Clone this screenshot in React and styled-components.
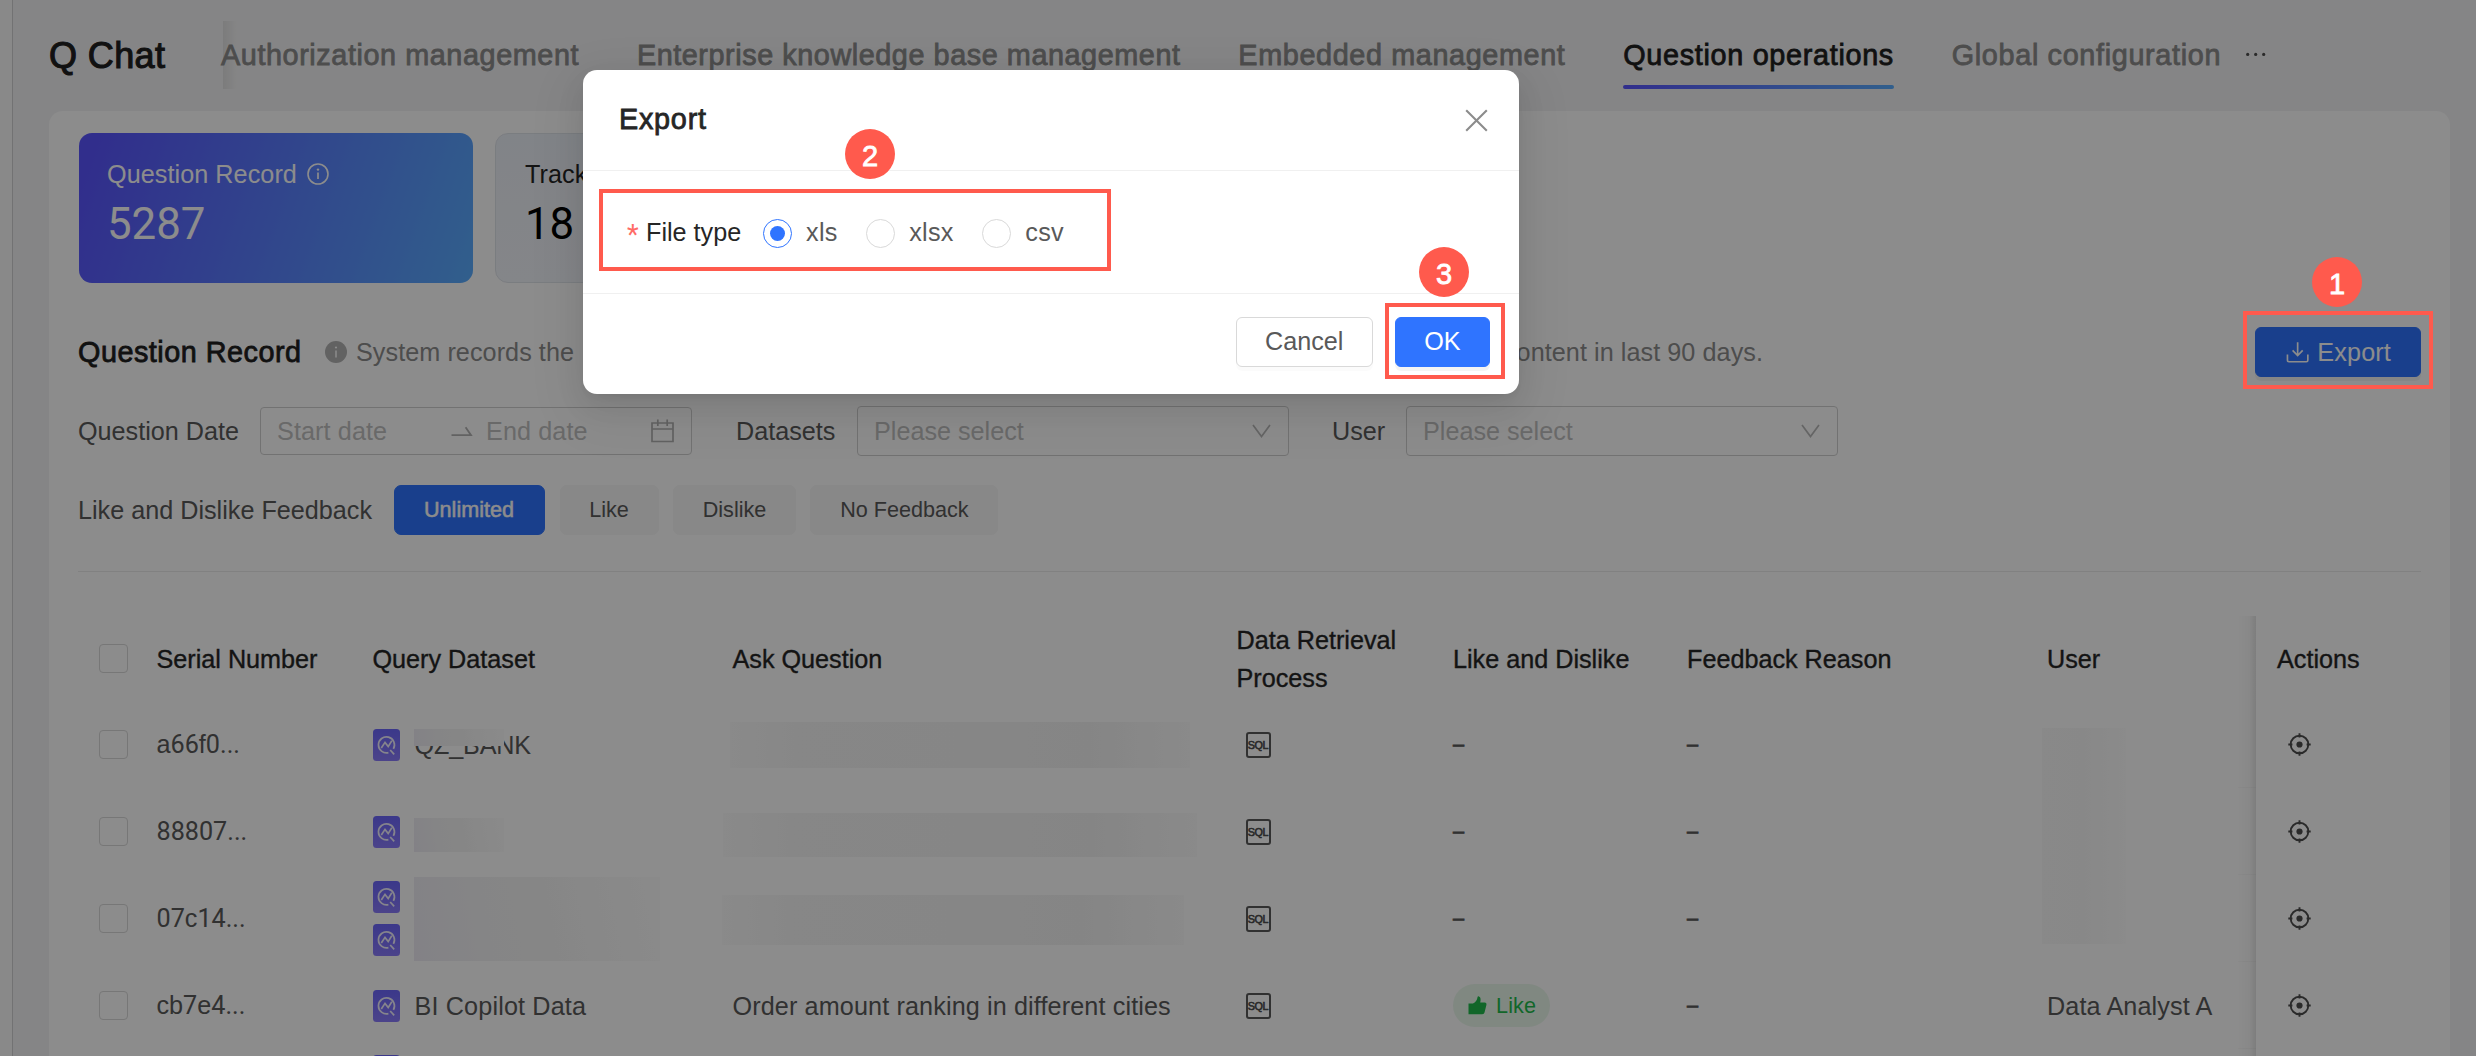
import React from "react";
import styled, { createGlobalStyle, css } from "styled-components";

const sans = `"Liberation Sans", Arial, Helvetica, sans-serif`;
const digits = `Roboto, "Liberation Sans", sans-serif`;

const GlobalStyle = createGlobalStyle`
  * { box-sizing: border-box; }
  html, body { margin: 0; padding: 0; overflow: hidden; }
  body { font-family: ${sans}; font-size: 25.2px; color: rgba(0, 0, 0, 0.65); }
`;

const medium = css`
  -webkit-text-stroke: 0.8px currentColor;
`;

const Screen = styled.div`
  position: relative;
  width: 2476px;
  height: 1056px;
  overflow: hidden;
  display: flex;
  background: #f3f3f4;
`;

const SideEdge = styled.div`
  flex: none;
  width: 13px;
  background: #fafafa;
  border-right: 1px solid #cfcfd1;
`;

const Main = styled.div`
  flex: 1;
  padding: 0 26px 0 36px;
  display: flex;
  flex-direction: column;
`;

const TopBar = styled.header`
  flex: none;
  height: 111px;
  display: flex;
  align-items: flex-start;
`;

const Brand = styled.h1`
  margin: 35px 0 0;
  width: 174px;
  font-size: 36px;
  line-height: 42px;
  font-weight: 400;
  letter-spacing: 0.4px;
  color: #1f1f1f;
  white-space: nowrap;
  -webkit-text-stroke: 1.1px currentColor;
`;

const Tabs = styled.nav`
  display: flex;
  gap: 57.8px;
  margin-top: 21px;
  height: 68px;
  background: linear-gradient(90deg, rgba(0, 0, 0, 0.075), rgba(0, 0, 0, 0) 14px);
`;

const Tab = styled.a`
  display: flex;
  flex-direction: column;
  justify-content: space-between;
  padding-top: 17px;
  font-size: 28.8px;
  line-height: 34px;
  letter-spacing: ${(p) => p.$spacing}px;
  white-space: nowrap;
  color: ${(p) => (p.$active ? "#1f1f1f" : "#8c8c8c")};
  ${medium}
  &:first-child {
    margin-left: -2px;
  }
  &::after {
    content: "";
    height: 4px;
    border-radius: 2px;
    background: ${(p) => (p.$active ? "linear-gradient(90deg, #5955ff, #59adff)" : "transparent")};
  }
`;

const More = styled.svg`
  margin: 50px 0 0 23px;
`;

const Panel = styled.main`
  flex: 1;
  padding: 22px 29px 0;
  border-radius: 14px 14px 0 0;
  background: #fff;
  overflow: hidden;
`;

const Stats = styled.div`
  display: flex;
  gap: 22px;
  padding-left: 1px;
`;

const StatCard = styled.div`
  width: 394px;
  height: 150px;
  padding: 24px 28px;
  border-radius: 13px;
  color: ${(p) => (p.$active ? "#fff" : "#262626")};
  ${(p) =>
    p.$active
      ? "background: linear-gradient(110deg, #5955ff 5%, #59adff);"
      : "background: linear-gradient(180deg, #ecf0f7, #f1f4f9); border: 1px solid #dfe3ea; padding: 23px 29px;"}
`;

const StatLabel = styled.div`
  display: flex;
  align-items: center;
  gap: 10px;
  line-height: 34px;
  letter-spacing: 0.06px;
  white-space: nowrap;
`;

const StatValue = styled.div`
  margin-top: 8px;
  font-family: ${digits};
  font-size: 43.8px;
  line-height: 50px;
  color: ${(p) => (p.$active ? "#fff" : "#000")};
`;

const TitleRow = styled.div`
  display: flex;
  align-items: center;
  height: 50px;
  margin-top: 44px;
`;

const SectionTitle = styled.h2`
  margin: 0;
  width: 247px;
  font-size: 28.8px;
  font-weight: 400;
  letter-spacing: 0.5px;
  color: #1f1f1f;
  white-space: nowrap;
  ${medium}
`;

const Notice = styled.p`
  margin: 0 auto 0 9px;
  width: 1407px;
  display: flex;
  justify-content: space-between;
  letter-spacing: 0.06px;
  color: #8c8c8c;
`;

const Button = styled.button`
  height: 50px;
  padding: 0 28.4px;
  display: flex;
  align-items: center;
  justify-content: center;
  gap: 8px;
  font: inherit;
  border-radius: 6px;
  border: 1px solid ${(p) => (p.$primary ? "#2f74ff" : "#d9d9d9")};
  background: ${(p) => (p.$primary ? "#2f74ff" : "#fff")};
  color: ${(p) => (p.$primary ? "#fff" : "#595959")};
  box-shadow: 0 4px 0 rgba(0, 0, 0, ${(p) => (p.$primary ? 0.043 : 0.016)});
`;

const ExportButton = styled(Button)`
  width: 166px;
  padding: 0 29px 0 30px;
  letter-spacing: 0.15px;
`;

const FilterRow = styled.div`
  display: flex;
  align-items: center;
  height: 50px;
  margin-top: 29px;
  color: #595959;
`;

const FilterLabel = styled.label`
  white-space: nowrap;
  width: ${(p) => p.$width}px;
`;

const Field = styled.div`
  width: 432px;
  height: ${(p) => p.$height}px;
  margin-right: ${(p) => p.$after}px;
  padding: 0 17px 0 16px;
  display: flex;
  align-items: center;
  border: 1px solid #d0d0d0;
  border-radius: 4px;
  color: #bfbfbf;
`;

const DateSlot = styled.span`
  display: flex;
  letter-spacing: 0.1px;
  width: ${(p) => p.$width}px;
`;

const Chevron = styled.svg`
  margin-left: auto;
`;

const Choices = styled.div`
  display: flex;
  gap: 14.5px;
`;

const Choice = styled.button`
  height: 50px;
  padding: 0 ${(p) => (p.$active ? 30 : 28.7)}px 0 ${(p) => (p.$active ? 29 : 28.7)}px;
  border: 1px solid ${(p) => (p.$active ? "#2f74ff" : "#f7f7f7")};
  border-radius: 7px;
  background: ${(p) => (p.$active ? "#2f74ff" : "#f7f7f7")};
  color: ${(p) => (p.$active ? "#fff" : "#595959")};
  font: inherit;
  font-size: 21.6px;
  -webkit-text-stroke: ${(p) => (p.$active ? "0.5px currentColor" : "0")};
`;

const Divider = styled.hr`
  height: 1px;
  margin: 36px 0 44px;
  border: 0;
  background: #ebebeb;
`;

const Table = styled.div`
  position: relative;
`;

const TableRow = styled.div`
  display: grid;
  grid-template-columns: 57px 216px 360px 504px 216.5px 234px 360px 230px 165px;
  height: ${(p) => (p.$header ? 85 : 87)}px;
  ${(p) => p.$header && "-webkit-text-stroke: 0.35px currentColor;"}
`;

const Cell = styled.div`
  display: flex;
  align-items: center;
  gap: 15px;
  padding: 0 0 0 21.5px;
  line-height: 38px;
  letter-spacing: ${(p) => (p.$header ? 0 : 0.12)}px;
  color: ${(p) => (p.$header ? "#262626" : "#595959")};
`;

const SelectCell = styled(Cell)`
  padding-left: 20.5px;
`;

const FixedCell = styled(Cell)`
  position: relative;
  background: #fff;
  &::before {
    content: "";
    position: absolute;
    right: 100%;
    top: 0;
    bottom: 0;
    width: 18px;
    border-bottom: ${(p) => (p.$header ? 0 : 1)}px solid rgba(0, 0, 0, 0.025);
    background: linear-gradient(270deg, rgba(0, 0, 0, 0.1), rgba(0, 0, 0, 0.03) 35%, rgba(0, 0, 0, 0));
  }
`;

const Checkbox = styled.span`
  flex: none;
  width: 29px;
  height: 29px;
  border: 1.5px solid #d9d9d9;
  border-radius: 4px;
`;

const Serial = styled.span`
  font-family: ${digits};
  font-size: 25.2px;
  letter-spacing: 0;
`;

const Letters = styled.span`
  font-family: ${sans};
`;

const Stack = styled.div`
  display: flex;
  flex-direction: column;
  gap: 11px;
`;

const DatasetName = styled.span`
  position: relative;
  letter-spacing: ${(p) => p.$spacing || 0}px;
  white-space: nowrap;
`;

const Smudge = styled.div`
  flex: none;
  width: ${(p) => p.$width}px;
  height: ${(p) => p.$height}px;
  margin: ${(p) => p.$margin || "0"};
  background: linear-gradient(90deg, #fbfbfb, #f6f6f6 14%, #f5f5f5 50%, #f3f3f3 78%, #fbfbfb);
`;

const TintedSmudge = styled(Smudge)`
  background: linear-gradient(80deg, #eeecf5, #f3f3f5 30%, #f5f5f5 55%, #fcfcfc);
`;

const PaleSmudge = styled(Smudge)`
  background: linear-gradient(90deg, #f9f9f9, #f8f8f8 50%, #fdfdfd);
`;

const NameCover = styled(TintedSmudge)`
  position: absolute;
  left: -1px;
  top: 3px;
`;

const Dash = styled.span`
  font-size: 20px;
  padding-bottom: 2px;
  -webkit-text-stroke: 0.7px currentColor;
`;

const LikeTag = styled.span`
  height: 43px;
  padding: 0 14px 0 15px;
  display: flex;
  align-items: center;
  gap: 9px;
  border-radius: 22px;
  background: #eaf8ec;
  color: #1fbb4c;
  font-size: 21.6px;
`;

const IconPad = styled.span`
  display: flex;
  padding-left: ${(p) => p.$left}px;
`;

const Mask = styled.div`
  position: absolute;
  inset: 0;
  padding: 70px 0 0 583px;
  background: rgba(0, 0, 0, 0.45);
`;

const Modal = styled.section`
  width: 936px;
  height: 324px;
  display: flex;
  flex-direction: column;
  border-radius: 14px;
  background: #fff;
  box-shadow: 0 5px 11px -7px rgba(0, 0, 0, 0.12), 0 11px 29px rgba(0, 0, 0, 0.08),
    0 16px 50px 14px rgba(0, 0, 0, 0.05);
`;

const ModalHeader = styled.div`
  height: 101px;
  padding: 0 31px 0 36px;
  display: flex;
  align-items: center;
  justify-content: space-between;
  border-bottom: 1px solid #f0f0f0;
`;

const ModalTitle = styled.h3`
  margin: -1px 0 0;
  font-size: 28.8px;
  font-weight: 400;
  letter-spacing: 0.75px;
  color: #262626;
  ${medium}
`;

const ModalBody = styled.div`
  height: 122px;
  padding: 3px 0 0 44px;
  display: flex;
  align-items: center;
`;

const Required = styled.span`
  width: 19px;
  padding-top: 2px;
  font-family: ${digits};
  font-size: 27px;
  color: #ff6b66;
`;

const FormLabel = styled.span`
  width: 117px;
  margin-top: -2px;
  color: #262626;
  white-space: nowrap;
`;

const RadioOption = styled.label`
  display: flex;
  align-items: center;
  gap: 14px;
  margin-right: 28.5px;
  letter-spacing: 0.3px;
  color: #595959;
`;

const RadioText = styled.span`
  margin-top: -2px;
`;

const RadioDot = styled.span`
  display: flex;
  align-items: center;
  justify-content: center;
  width: 29px;
  height: 29px;
  border-radius: 50%;
  border: 1.6px solid ${(p) => (p.$checked ? "#2f74ff" : "#d9d9d9")};
  &::after {
    content: "";
    width: 15px;
    height: 15px;
    border-radius: 50%;
    background: ${(p) => (p.$checked ? "#2f74ff" : "transparent")};
  }
`;

const ModalFooter = styled.div`
  flex: 1;
  padding: 0 29px 5px;
  display: flex;
  align-items: center;
  justify-content: flex-end;
  gap: 22px;
  border-top: 1px solid #f0f0f0;
`;

const Highlight = styled.div`
  position: absolute;
  left: ${(p) => p.$x}px;
  top: ${(p) => p.$y}px;
  width: ${(p) => p.$w}px;
  height: ${(p) => p.$h}px;
  border: 4px solid #ff5a4d;
`;

const StepBadge = styled.div`
  position: absolute;
  left: ${(p) => p.$x}px;
  top: ${(p) => p.$y}px;
  width: 50px;
  height: 50px;
  padding-top: 3px;
  display: flex;
  align-items: center;
  justify-content: center;
  border-radius: 50%;
  background: #ff5a4d;
  color: #fff;
  font-size: 29px;
  line-height: 34px;
  ${medium}
`;

const InfoOutline = () => (
  <svg width="22" height="22" viewBox="0 0 22 22" fill="none" stroke="#fff">
    <circle cx="11" cy="11" r="10" strokeWidth="1.6" />
    <path d="M11 9.5V16" strokeWidth="1.7" />
    <circle cx="11" cy="6.6" r="1.2" fill="#fff" stroke="none" />
  </svg>
);

const InfoFilled = () => (
  <svg width="22" height="22" viewBox="0 0 22 22">
    <circle cx="11" cy="11" r="11" fill="#b3b3b3" />
    <path d="M11 9.5V16.5" stroke="#fff" strokeWidth="1.5" />
    <circle cx="11" cy="6.5" r="1.1" fill="#fff" />
  </svg>
);

const DownloadIcon = () => (
  <svg width="24" height="24" viewBox="0 0 24 24" fill="none" stroke="#fff" strokeWidth="1.7">
    <path d="M12 2V15.5M6.8 10.4L12 15.6L17.2 10.4M1.5 14.5V20.5Q1.5 22 3 22H21Q22.5 22 22.5 20.5V14.5" />
  </svg>
);

const CalendarIcon = () => (
  <svg width="23" height="24" viewBox="0 0 23 24" fill="none" stroke="#b3b3b3" strokeWidth="1.7">
    <path d="M1 4H22V22.5H1ZM1 10H22M6.8 0.5V7M16.2 0.5V7" />
  </svg>
);

const SwapArrow = () => (
  <svg width="22" height="12" viewBox="0 0 22 12" fill="none" stroke="#b3b3b3" strokeWidth="1.8">
    <path d="M0.5 10.2H20L14.6 2.2" />
  </svg>
);

const DownIcon = () => (
  <Chevron width="19" height="14" viewBox="0 0 19 14" fill="none" stroke="#b8b8b8" strokeWidth="1.7">
    <path d="M1 1L9.5 12.5L18 1" />
  </Chevron>
);

const CloseIcon = () => (
  <svg width="23" height="23" viewBox="0 0 23 23" fill="none" stroke="#8c8c8c" strokeWidth="2.1">
    <path d="M1.2 1.2L21.8 21.8M21.8 1.2L1.2 21.8" />
  </svg>
);

const DatasetSvg = styled.svg`
  flex: none;
`;

const DatasetIcon = () => (
  <DatasetSvg width="27" height="32" viewBox="0 0 27 32">
    <defs>
      <linearGradient id="datasetFill" x1="0" y1="0" x2="0" y2="1">
        <stop offset="0" stopColor="#6c67fb" />
        <stop offset="1" stopColor="#8a7bfb" />
      </linearGradient>
    </defs>
    <rect width="27" height="32" rx="3.5" fill="url(#datasetFill)" />
    <g fill="none" stroke="#f2f0ff" strokeWidth="1.7">
      <path d="M15.4 23.6A8 8 0 1 1 20.4 19.8" />
      <path d="M8.3 19L12 13.4L15.2 17.6L18.8 11.8" />
      <path d="M17.2 21L21.2 25.4" />
    </g>
  </DatasetSvg>
);

const SqlBox = styled.span`
  display: flex;
  align-items: center;
  justify-content: center;
  width: 25px;
  height: 26px;
  border: 2px solid #595959;
  border-radius: 3px;
  color: #4a4a4a;
  font-size: 10.8px;
  line-height: 12px;
  letter-spacing: -0.4px;
  -webkit-text-stroke: 0.6px currentColor;
`;

const LocateIcon = () => (
  <svg width="23" height="23" viewBox="0 0 23 23" fill="none" stroke="#4d4d4d" strokeWidth="1.9">
    <circle cx="11.5" cy="11.5" r="8.8" />
    <path d="M11.5 0.3V4.4M11.5 18.6V22.7M0.3 11.5H4.4M18.6 11.5H22.7" />
    <circle cx="11.5" cy="11.5" r="3.1" fill="#4d4d4d" stroke="none" />
  </svg>
);

const ThumbIcon = () => (
  <svg width="19" height="19" viewBox="0 0 19 19" fill="#1fbb4c">
    <path d="M0.5 7.6H4.9C7.5 6.2 9.2 4.2 9.5 1.2C9.6 0.4 10.2 0.2 10.9 0.4C12.9 1.1 12.9 3.8 12.2 6.5H16.6C18.2 6.5 18.8 7.6 18.4 8.9L16.6 16.3C16.3 17.6 15.5 18.3 14.2 18.3H0.5Z" />
  </svg>
);

const tabs = [
  { label: "Authorization management", spacing: 0.58 },
  { label: "Enterprise knowledge base management", spacing: 0.56 },
  { label: "Embedded management", spacing: 0.62 },
  { label: "Question operations", spacing: 0.68, active: true },
  { label: "Global configuration", spacing: 0.66 },
];

const headers = [
  "Serial Number",
  "Query Dataset",
  "Ask Question",
  <>Data Retrieval<br />Process</>,
  "Like and Dislike",
  "Feedback Reason",
  "User",
];

const rows = [
  {
    serial: [<Letters key="a">a</Letters>, "66", <Letters key="f">f</Letters>, "0..."],
    icons: 1,
    name: (
      <DatasetName $spacing={-0.15}>
        QZ_BANK
        <NameCover $width={90} $height={17} />
      </DatasetName>
    ),
    question: <Smudge $width={460} $height={46} $margin="0 0 0 -3px" />,
    user: <PaleSmudge $width={84} $height={60} $margin="27px 0 0 -5px" />,
  },
  {
    serial: ["88807..."],
    icons: 1,
    name: <TintedSmudge $width={90} $height={34} $margin="6px 0 0 -1px" />,
    question: <Smudge $width={474} $height={44} $margin="7px 0 0 -10px" />,
    user: <PaleSmudge $width={84} $height={87} $margin="0 0 0 -5px" />,
  },
  {
    serial: ["07", <Letters key="c">c</Letters>, "14..."],
    icons: 2,
    name: <TintedSmudge $width={246} $height={84} $margin="0 0 0 -1px" />,
    question: <Smudge $width={462} $height={50} $margin="2px 0 0 -11px" />,
    user: <PaleSmudge $width={84} $height={69} $margin="0 0 18px -5px" />,
  },
  {
    serial: [<Letters key="cb">cb</Letters>, "7", <Letters key="e">e</Letters>, "4..."],
    icons: 1,
    name: <DatasetName $spacing={0.15}>BI Copilot Data</DatasetName>,
    question: "Order amount ranking in different cities",
    liked: true,
    user: "Data Analyst A",
  },
];

const Record = ({ row }) => (
  <TableRow>
    <SelectCell><Checkbox /></SelectCell>
    <Cell><Serial>{row.serial}</Serial></Cell>
    <Cell>
      <Stack>
        {Array.from({ length: row.icons }, (_, i) => <DatasetIcon key={i} />)}
      </Stack>
      {row.name}
    </Cell>
    <Cell>{row.question}</Cell>
    <Cell><IconPad $left={9}><SqlBox>SQL</SqlBox></IconPad></Cell>
    <Cell>{row.liked ? <LikeTag><ThumbIcon />Like</LikeTag> : <Dash>–</Dash>}</Cell>
    <Cell><Dash>–</Dash></Cell>
    <Cell>{row.user}</Cell>
    <FixedCell><IconPad $left={10.5}><LocateIcon /></IconPad></FixedCell>
  </TableRow>
);

export default function App() {
  return (
    <Screen>
      <GlobalStyle />
      <SideEdge />
      <Main>
        <TopBar>
          <Brand>Q Chat</Brand>
          <Tabs>
            {tabs.map((t) => (
              <Tab key={t.label} $active={t.active} $spacing={t.spacing}>{t.label}</Tab>
            ))}
          </Tabs>
          <More width="24" height="8" viewBox="0 0 24 8" fill="#4d4d4d">
            <circle cx="3.7" cy="4.4" r="1.6" />
            <circle cx="11.7" cy="4.4" r="1.6" />
            <circle cx="19.7" cy="4.4" r="1.6" />
          </More>
        </TopBar>
        <Panel>
          <Stats>
            <StatCard $active>
              <StatLabel>Question Record <InfoOutline /></StatLabel>
              <StatValue $active>5287</StatValue>
            </StatCard>
            <StatCard>
              <StatLabel>Track</StatLabel>
              <StatValue>18</StatValue>
            </StatCard>
          </Stats>
          <TitleRow>
            <SectionTitle>Question Record</SectionTitle>
            <InfoFilled />
            <Notice>
              <span>System records the</span>
              <span>content in last 90 days.</span>
            </Notice>
            <ExportButton $primary><DownloadIcon />Export</ExportButton>
          </TitleRow>
          <FilterRow>
            <FilterLabel $width={182}>Question Date</FilterLabel>
            <Field $height={48} $after={44}>
              <DateSlot $width={174}>Start date</DateSlot>
              <DateSlot $width={35}><SwapArrow /></DateSlot>
              <DateSlot $width={165}>End date</DateSlot>
              <CalendarIcon />
            </Field>
            <FilterLabel $width={121}>Datasets</FilterLabel>
            <Field $height={50} $after={43}>Please select<DownIcon /></Field>
            <FilterLabel $width={74}>User</FilterLabel>
            <Field $height={50} $after={0}>Please select<DownIcon /></Field>
          </FilterRow>
          <FilterRow>
            <FilterLabel $width={316}>Like and Dislike Feedback</FilterLabel>
            <Choices>
              {["Unlimited", "Like", "Dislike", "No Feedback"].map((c, i) => (
                <Choice key={c} $active={i === 0}>{c}</Choice>
              ))}
            </Choices>
          </FilterRow>
          <Divider />
          <Table>
            <TableRow $header>
              <SelectCell $header><Checkbox /></SelectCell>
              {headers.map((h, i) => <Cell $header key={i}>{h}</Cell>)}
              <FixedCell $header>Actions</FixedCell>
            </TableRow>
            {rows.map((row, i) => <Record key={i} row={row} />)}
            <TableRow>
              <Cell />
              <Cell />
              <Cell>
                <Stack>
                  <DatasetIcon />
                  <DatasetIcon />
                </Stack>
              </Cell>
              <Cell />
              <Cell />
              <Cell />
              <Cell />
              <Cell />
              <FixedCell />
            </TableRow>
          </Table>
        </Panel>
      </Main>
      <Mask>
        <Modal>
          <ModalHeader>
            <ModalTitle>Export</ModalTitle>
            <CloseIcon />
          </ModalHeader>
          <ModalBody>
            <Required>*</Required>
            <FormLabel>File type</FormLabel>
            {["xls", "xlsx", "csv"].map((f, i) => (
              <RadioOption key={f}><RadioDot $checked={i === 0} /><RadioText>{f}</RadioText></RadioOption>
            ))}
          </ModalBody>
          <ModalFooter>
            <Button>Cancel</Button>
            <Button $primary>OK</Button>
          </ModalFooter>
        </Modal>
      </Mask>
      <Highlight $x={2243} $y={311} $w={190} $h={78} />
      <StepBadge $x={2312} $y={257}>1</StepBadge>
      <Highlight $x={599} $y={189} $w={512} $h={82} />
      <StepBadge $x={845} $y={129}>2</StepBadge>
      <Highlight $x={1385} $y={303} $w={120} $h={76} />
      <StepBadge $x={1419} $y={247}>3</StepBadge>
    </Screen>
  );
}
